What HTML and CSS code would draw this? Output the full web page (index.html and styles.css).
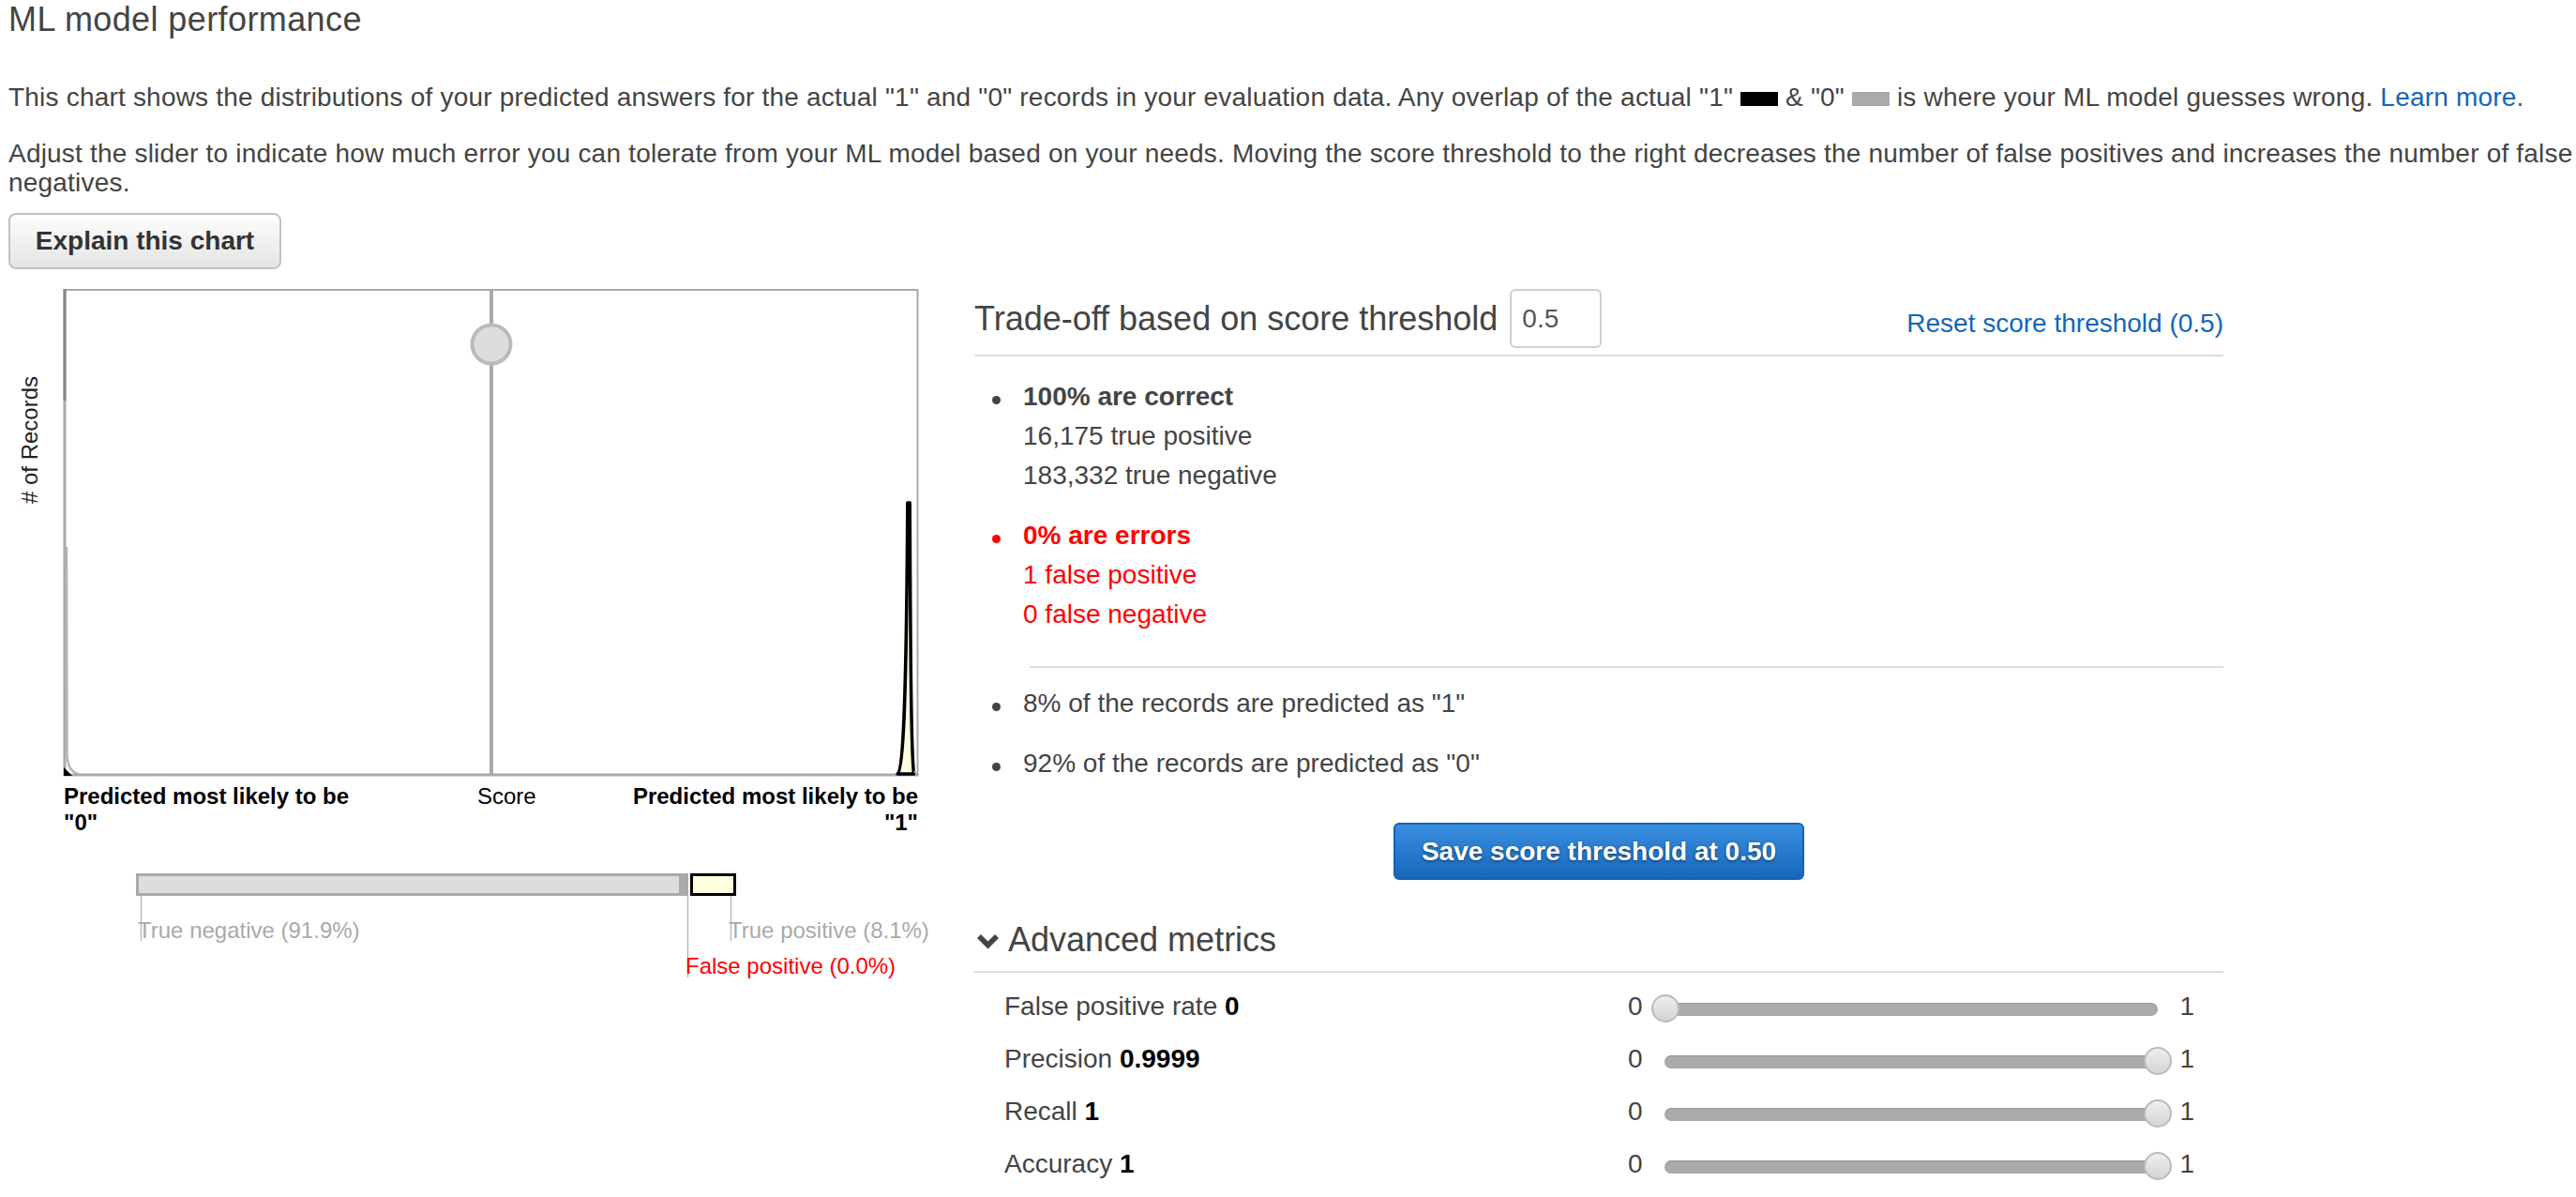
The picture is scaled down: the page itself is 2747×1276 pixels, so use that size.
FILE: index.html
```html
<!DOCTYPE html>
<html lang="en">
<head>
<meta charset="utf-8">
<title>ML model performance</title>
<link rel="stylesheet" href="styles.css">
</head>
<body>
<div class="page">
  <h1 class="title">ML model performance</h1>
  <p class="intro">This chart shows the distributions of your predicted answers for the actual "1" and "0" records in your evaluation data. Any overlap of the actual "1" <span class="swatch swatch-one"></span> &amp; "0" <span class="swatch swatch-zero"></span> is where your ML model guesses wrong. <a class="link" href="#">Learn more.</a></p>
  <p class="intro intro-second">Adjust the slider to indicate how much error you can tolerate from your ML model based on your needs. Moving the score threshold to the right decreases the number of false positives and increases the number of false negatives.</p>
  <button class="btn-explain" type="button">Explain this chart</button>

  <div class="main">
    <div class="chart-col">
      <svg class="chart" width="1030" height="760" viewBox="9 300 1030 760" xmlns="http://www.w3.org/2000/svg">
        <rect x="68" y="308" width="911" height="519" fill="#fff"/>
        <line x1="68" y1="309" x2="979" y2="309" stroke="#aaa" stroke-width="2"/>
        <line x1="978.5" y1="308" x2="978.5" y2="827" stroke="#aaa" stroke-width="2"/>
        <line x1="69" y1="308" x2="69" y2="827" stroke="#aaa" stroke-width="3"/>
        <line x1="69" y1="308" x2="69" y2="427" stroke="#888" stroke-width="3"/>
        <path d="M71 583 L71.5 805 Q72.5 823 84 825" fill="none" stroke="#b4b4b4" stroke-width="2.5"/>
        <line x1="67.5" y1="826" x2="979.5" y2="826" stroke="#aaa" stroke-width="3"/>
        <path d="M68 818 L77 827 L68 827 Z" fill="#000"/>
        <line x1="524" y1="308" x2="524" y2="827" stroke="#aaa" stroke-width="4"/>
        <circle cx="524" cy="367" r="20.5" fill="#ddd" stroke="#bbb" stroke-width="4"/>
        <path d="M957 825 C963 822 966.5 760 967.8 536 L970.2 536 C971 700 971.5 800 974.5 825 Z" fill="#ffffe0" stroke="#000" stroke-width="3.5" stroke-linejoin="round"/>
        <line x1="975" y1="822" x2="978" y2="826" stroke="#aaa" stroke-width="2"/>

        <text class="chart-text axis-title" x="40" y="469" transform="rotate(-90 40 469)" text-anchor="middle"># of Records</text>

        <text class="chart-text chart-bold" x="68" y="857">Predicted most likely to be</text>
        <text class="chart-text chart-bold" x="68" y="885">"0"</text>
        <text class="chart-text" x="509" y="857">Score</text>
        <text class="chart-text chart-bold" x="979" y="857" text-anchor="end">Predicted most likely to be</text>
        <text class="chart-text chart-bold" x="979" y="885" text-anchor="end">"1"</text>

        <rect x="146.5" y="932.5" width="579" height="21" fill="#ddd" stroke="#aaa" stroke-width="3"/>
        <rect x="724" y="931" width="10" height="24" fill="#aaa"/>
        <rect x="737.5" y="932.5" width="46" height="21" fill="#ffffe0" stroke="#000" stroke-width="3"/>
        <line x1="150.5" y1="955" x2="150.5" y2="1003" stroke="#bbb" stroke-width="1.5"/>
        <line x1="733.5" y1="955" x2="733.5" y2="1042" stroke="#bbb" stroke-width="1.5"/>
        <line x1="779.5" y1="955" x2="779.5" y2="1003" stroke="#bbb" stroke-width="1.5"/>
        <text class="chart-text legend-muted" x="147" y="1000">True negative (91.9%)</text>
        <text class="chart-text legend-muted" x="777" y="1000">True positive (8.1%)</text>
        <text class="chart-text legend-error" x="731" y="1038">False positive (0.0%)</text>
      </svg>
    </div>

    <section class="panel">
      <div class="panel-header">
        <div class="header-left">
          <h2 class="panel-title">Trade-off based on score threshold</h2>
          <input class="threshold-input" type="text" value="0.5">
        </div>
        <a class="link reset-link" href="#">Reset score threshold (0.5)</a>
      </div>

      <ul class="stats">
        <li class="stat-group">
          <div class="stat-head">100% are correct</div>
          <div>16,175 true positive</div>
          <div>183,332 true negative</div>
        </li>
        <li class="stat-group stat-error">
          <div class="stat-head">0% are errors</div>
          <div>1 false positive</div>
          <div>0 false negative</div>
        </li>
      </ul>

      <div class="divider-indent"></div>

      <ul class="stats stats-predicted">
        <li class="stat-group">8% of the records are predicted as "1"</li>
        <li class="stat-group">92% of the records are predicted as "0"</li>
      </ul>

      <div class="save-wrap">
        <button class="btn-save" type="button">Save score threshold at 0.50</button>
      </div>

      <h3 class="adv-title"><svg class="chevron" width="23" height="17" viewBox="0 0 23 17" xmlns="http://www.w3.org/2000/svg"><polygon points="0,5 4,1 11.5,8.5 19,1 23,5 11.5,16.5" fill="#444"/></svg>Advanced metrics</h3>

      <div class="metrics">
        <div class="metric-row">
          <div class="metric-name">False positive rate <b>0</b></div>
          <span class="range-end">0</span>
          <div class="slider"><span class="handle handle-min"></span></div>
          <span class="range-end range-max">1</span>
        </div>
        <div class="metric-row">
          <div class="metric-name">Precision <b>0.9999</b></div>
          <span class="range-end">0</span>
          <div class="slider"><span class="handle handle-max"></span></div>
          <span class="range-end range-max">1</span>
        </div>
        <div class="metric-row">
          <div class="metric-name">Recall <b>1</b></div>
          <span class="range-end">0</span>
          <div class="slider"><span class="handle handle-max"></span></div>
          <span class="range-end range-max">1</span>
        </div>
        <div class="metric-row">
          <div class="metric-name">Accuracy <b>1</b></div>
          <span class="range-end">0</span>
          <div class="slider"><span class="handle handle-max"></span></div>
          <span class="range-end range-max">1</span>
        </div>
      </div>
    </section>
  </div>
</div>
</body>
</html>
```

FILE: styles.css
```css
html, body {
  margin: 0;
  padding: 0;
  background: #fff;
}

body {
  font-family: "Liberation Sans", Arial, Helvetica, sans-serif;
  color: #444;
}

.page {
  padding: 0 0 0 9px;
}

.title {
  margin: 0;
  font-size: 36px;
  line-height: 42px;
  font-weight: normal;
  letter-spacing: 0.4px;
  color: #444;
}

.intro {
  margin: 46px 0 0;
  font-size: 28px;
  line-height: 31px;
  letter-spacing: 0.2px;
}

.intro-second {
  margin-top: 29px;
}

.swatch {
  display: inline-block;
  width: 40px;
  height: 15px;
  vertical-align: baseline;
}

.swatch-one {
  background: #000;
}

.swatch-zero {
  background: #aaa;
}

.link {
  color: #1166bb;
  text-decoration: none;
}

.btn-explain {
  display: block;
  margin: 17px 0 0;
  width: 291px;
  height: 60px;
  box-sizing: border-box;
  border: 2px solid #c2c2c2;
  border-radius: 8px;
  background: linear-gradient(#fdfdfd, #e4e4e4);
  font-family: "Liberation Sans", Arial, Helvetica, sans-serif;
  font-size: 28px;
  font-weight: bold;
  color: #333;
  padding: 0;
}

.main {
  display: flex;
  margin-top: 13px;
}

.chart-col {
  flex: none;
  width: 1030px;
}

.chart {
  display: block;
}

.chart-text {
  font-family: "Liberation Sans", Arial, Helvetica, sans-serif;
  font-size: 24px;
  fill: #000;
}

.chart-bold {
  font-weight: bold;
}

.axis-title {
  fill: #222;
}

.legend-muted {
  fill: #aaa;
}

.legend-error {
  fill: #f00;
}

.panel {
  flex: none;
  width: 1332px;
  padding-top: 8px;
}

.panel-header {
  display: flex;
  align-items: center;
  justify-content: space-between;
  padding-bottom: 7px;
  border-bottom: 2px solid #ddd;
}

.header-left {
  display: flex;
  align-items: center;
  gap: 13px;
}

.panel-title {
  margin: 0;
  font-size: 36px;
  line-height: 42px;
  font-weight: normal;
  color: #444;
}

.threshold-input {
  width: 98px;
  height: 63px;
  box-sizing: border-box;
  border: 2px solid #d0d0d0;
  border-radius: 6px;
  padding: 0 0 0 11px;
  font-family: "Liberation Sans", Arial, Helvetica, sans-serif;
  font-size: 28px;
  color: #555;
  background: #fff;
  box-shadow: inset 0 1px 2px rgba(0, 0, 0, 0.06);
}

.reset-link {
  font-size: 28px;
  line-height: 42px;
  padding-top: 10px;
}

.stats {
  list-style: none;
  margin: 22px 0 0;
  padding: 0 0 0 52px;
}

.stat-group {
  position: relative;
  font-size: 28px;
  line-height: 42px;
  color: #444;
}

.stat-group + .stat-group {
  margin-top: 22px;
}

.stat-group::before {
  content: "";
  position: absolute;
  left: -33px;
  top: 20px;
  width: 9px;
  height: 9px;
  border-radius: 50%;
  background: currentColor;
}

.stat-head {
  font-weight: bold;
}

.stat-error {
  color: #f00;
}

.divider-indent {
  margin: 34px 0 0 59px;
  border-top: 2px solid #ddd;
}

.stats-predicted {
  margin-top: 17px;
}

.save-wrap {
  margin-top: 42px;
  display: flex;
  justify-content: center;
}

.btn-save {
  width: 438px;
  height: 61px;
  box-sizing: border-box;
  border: 2px solid #1562b3;
  border-radius: 6px;
  background: linear-gradient(#3a8ee0, #1667bb);
  color: #fff;
  font-family: "Liberation Sans", Arial, Helvetica, sans-serif;
  font-size: 28px;
  font-weight: bold;
  text-shadow: 0 1px 3px rgba(0, 0, 0, 0.55);
  padding: 0;
}

.adv-title {
  margin: 43px 0 0;
  padding-bottom: 12px;
  border-bottom: 2px solid #ddd;
  font-size: 36px;
  line-height: 42px;
  font-weight: normal;
  color: #444;
}

.chevron {
  margin: 0 10px 0 3px;
  vertical-align: 2px;
}

.metrics {
  margin-top: 8px;
}

.metric-row {
  display: flex;
  align-items: center;
  height: 56px;
  padding-left: 32px;
  font-size: 28px;
  color: #444;
}

.metric-name {
  width: 665px;
  flex: none;
}

.metric-name b {
  color: #000;
}

.range-end {
  flex: none;
}

.slider {
  position: relative;
  flex: none;
  width: 526px;
  height: 14px;
  margin: 6px 0 0 23px;
  border-radius: 7px;
  background: #aaa;
  box-shadow: inset 0 1px 1px rgba(0, 0, 0, 0.12);
}

.range-max {
  margin-left: 24px;
}

.handle {
  position: absolute;
  top: -9px;
  width: 30px;
  height: 30px;
  box-sizing: border-box;
  border-radius: 50%;
  border: 2px solid #bbb;
  background: linear-gradient(#eee, #d4d4d4);
}

.handle-min {
  left: -14px;
}

.handle-max {
  right: -15px;
}
```
